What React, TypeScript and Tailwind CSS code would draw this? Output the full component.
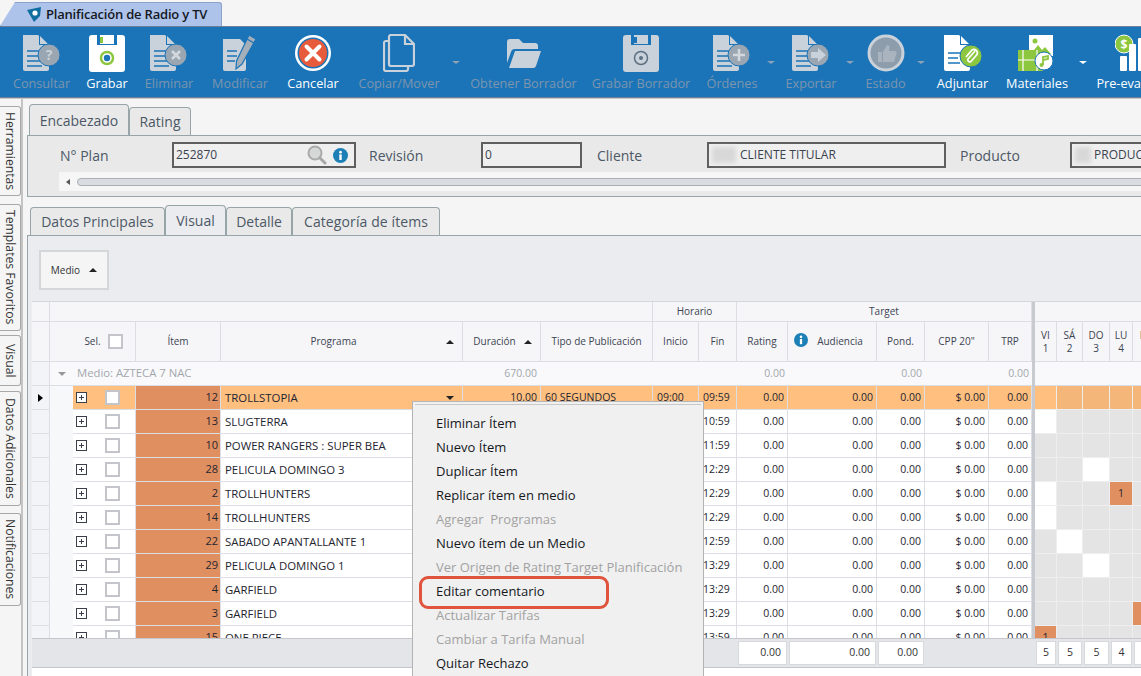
import React from "react";

const gridCols =
  "grid grid-cols-[18px_23px_17px_46px_85px_242px_78px_112px_46px_38px_51px_89px_48px_64px_43px_3px_22px_26px_27px_23px_30px]";

const cellBorder = "border-r border-b border-[#dcdee3]";
const sansFont = "font-['Open_Sans',sans-serif]";

const FileBody = ({ color, children }: { color: string; children?: React.ReactNode }) => (
  <svg width="40" height="38" viewBox="0 0 40 38">
    <path d="M1 1h15l11 11v23a2 2 0 0 1-2 2H3a2 2 0 0 1-2-2z" fill={color} />
    <path d="M17 1v10h10z" fill="#1b74b8" />
    <path d="M18 2l8 8h-8z" fill={color} />
    <path d="M5 17h12M5 22h12M5 27h15M5 32h15" stroke="#1b74b8" strokeWidth="1.6" />
    {children}
  </svg>
);

const BadgeDoc = ({ glyph }: { glyph: "q" | "x" | "plus" | "arrow" }) => (
  <FileBody color="#c9d1da">
    <circle cx="27" cy="21" r="11" fill="#9aa6b2" stroke="#1b74b8" strokeWidth="1" />
    {glyph === "q" && (
      <text x="27" y="26" textAnchor="middle" fontSize="14" fontWeight="700" fill="#c9d1da">
        ?
      </text>
    )}
    {glyph === "x" && <path d="M23 17l8 8M31 17l-8 8" stroke="#d3d8de" strokeWidth="2.6" />}
    {glyph === "plus" && <path d="M27 15v12M21 21h12" stroke="#d3d8de" strokeWidth="2.6" />}
    {glyph === "arrow" && <path d="M20 18h7v-4l8 7-8 7v-4h-7z" fill="#c9d1da" />}
  </FileBody>
);

const Floppy = ({ color, ring }: { color: string; ring?: boolean }) => (
  <svg width="38" height="38" viewBox="0 0 38 38">
    <path d="M4 1h5v10h20V1h5a3 3 0 0 1 3 3v31a3 3 0 0 1-3 3H4a3 3 0 0 1-3-3V4a3 3 0 0 1 3-3z" fill={color} />
    <rect x="12" y="1" width="14" height="9" fill={color} />
    <rect x="12" y="3" width="3" height="6" fill={ring ? "#8dc63f" : "#1b74b8"} />
    <circle cx="19" cy="24" r="6.5" fill={ring ? "#8dc63f" : "none"} stroke={ring ? "#8dc63f" : "#5d7182"} strokeWidth="1.5" />
    <circle cx="19" cy="24" r="4" fill={ring ? "#1c75b9" : color} stroke={ring ? "#fff" : "none"} strokeWidth="1.6" />
    {!ring && <circle cx="19" cy="24" r="2" fill="#5d7182" />}
  </svg>
);

const PencilDoc = () => (
  <svg width="36" height="38" viewBox="0 0 36 38">
    <path d="M1 5h17l6 6v24a2 2 0 0 1-2 2H3a2 2 0 0 1-2-2z" fill="#c9d1da" />
    <path d="M5 17h10M5 22h10M5 27h8" stroke="#1b74b8" strokeWidth="1.6" />
    <path d="M27 1l7 4-14 25-6 5 .5-8z" fill="#a4afba" stroke="#1b74b8" strokeWidth="1.2" />
    <path d="M25 5l7 4" stroke="#1b74b8" strokeWidth="1.4" />
  </svg>
);

const CancelIcon = () => (
  <svg width="38" height="38" viewBox="0 0 38 38">
    <circle cx="19" cy="19" r="18" fill="#fff" />
    <circle cx="19" cy="19" r="15.5" fill="#1b74b8" />
    <circle cx="19" cy="19" r="14" fill="#e85a3c" />
    <path d="M12.5 12.5l13 13M25.5 12.5l-13 13" stroke="#fff" strokeWidth="4" strokeLinecap="round" />
  </svg>
);

const CopyIcon = () => (
  <svg width="32" height="38" viewBox="0 0 32 38" fill="none" stroke="#c9d1da" strokeWidth="2.2">
    <path d="M6 7H3a2 2 0 0 0-2 2v26a2 2 0 0 0 2 2h20a2 2 0 0 0 2-2v-3" />
    <path d="M8 1h14l9 9v20a2 2 0 0 1-2 2H8a2 2 0 0 1-2-2V3a2 2 0 0 1 2-2z" />
    <path d="M22 1v9h9" />
  </svg>
);

const FolderIcon = () => (
  <svg width="36" height="34" viewBox="0 0 36 34">
    <path d="M1 6a3 3 0 0 1 3-3h9l4 4h12a3 3 0 0 1 3 3v3H9a4 4 0 0 0-4 3L1 27z" fill="#c9d1da" />
    <path d="M9 15h26l-5 15a3 3 0 0 1-3 2H3z" fill="#c9d1da" />
  </svg>
);

const ThumbIcon = () => (
  <svg width="38" height="38" viewBox="0 0 38 38">
    <circle cx="19" cy="19" r="17" fill="#8e9dac" stroke="#c9d1da" strokeWidth="3" />
    <path d="M11 18h4v10h-4zM16 18l4-7c2 0 3 1 2.500 3l-.5 3h6c1 0 2 1 1.500 2.500l-2 7c-.3 1-1 1.500-2 1.500H16z" fill="#a9b4bf" />
  </svg>
);

const AttachIcon = () => (
  <svg width="40" height="38" viewBox="0 0 40 38">
    <path d="M1 1h15l11 11v23a2 2 0 0 1-2 2H3a2 2 0 0 1-2-2z" fill="#fff" />
    <path d="M17 1v10h10z" fill="#1b74b8" />
    <path d="M18 2l8 8h-8z" fill="#fff" />
    <path d="M5 19h12M5 24h10M5 29h12" stroke="#1b74b8" strokeWidth="1.6" />
    <circle cx="28" cy="22" r="11" fill="#8dc63f" stroke="#1b74b8" />
    <path d="M32 17l-7 8a2 2 0 0 0 3 2.500l6-7a3.500 3.500 0 0 0-5-4.500l-6 7" fill="none" stroke="#fff" strokeWidth="1.7" />
  </svg>
);

const MaterialsIcon = () => (
  <svg width="40" height="38" viewBox="0 0 40 38">
    <rect x="12" y="1" width="24" height="21" fill="#fff" />
    <circle cx="18" cy="7" r="2.500" fill="#8dc63f" />
    <path d="M14 20l7-9 4 5 3-3 6 7z" fill="#8dc63f" />
    <rect x="1" y="16" width="25" height="21" fill="#8dc63f" />
    <path d="M6 16v21M20 16v21M1 26h25" stroke="#fff" strokeWidth="1.2" />
    <circle cx="27" cy="27" r="9" fill="#fff" stroke="#1b74b8" />
    <path d="M26 31v-8l5-1v3l-5 1" fill="none" stroke="#8dc63f" strokeWidth="1.8" />
    <circle cx="24.500" cy="31" r="2" fill="#8dc63f" />
  </svg>
);

const PreEvalIcon = () => (
  <svg width="50" height="38" viewBox="0 0 50 38">
    <circle cx="9" cy="10" r="9" fill="#8dc63f" stroke="#fff" strokeWidth="1" />
    <text x="9" y="14.500" textAnchor="middle" fontSize="12" fontWeight="700" fill="#fff">
      $
    </text>
    <rect x="5" y="22" width="7" height="15" rx="1" fill="#fff" />
    <rect x="14" y="10" width="7" height="27" rx="1" fill="#fff" />
    <rect x="23" y="4" width="7" height="33" rx="1" fill="#fff" />
  </svg>
);

const InfoDot = ({ size = 15 }: { size?: number }) => (
  <svg width={size} height={size} viewBox="0 0 16 16">
    <circle cx="8" cy="8" r="8" fill="#1c7fb5" />
    <rect x="6.700" y="6.800" width="2.600" height="6" fill="#fff" />
    <circle cx="8" cy="4.400" r="1.500" fill="#fff" />
  </svg>
);

const SearchIcon = () => (
  <svg width="20" height="20" viewBox="0 0 20 20">
    <circle cx="8" cy="8" r="6.500" fill="#d6d8d8" stroke="#aaa" strokeWidth="2" />
    <path d="M13 13l5 5" stroke="#a8a8a8" strokeWidth="3" strokeLinecap="round" />
  </svg>
);

type ToolEntry =
  | { kind: "arrow"; cls: string; on?: boolean }
  | { kind: "tool"; cls: string; label: string; on?: boolean; icon: React.ReactNode };

const tools: ToolEntry[] = [
  { kind: "tool", cls: "ml-0 w-[59px]", label: "Consultar", icon: <BadgeDoc glyph="q" /> },
  { kind: "tool", cls: "ml-[16px] w-[40px]", label: "Grabar", on: true, icon: <Floppy color="#fff" ring /> },
  { kind: "tool", cls: "ml-[17px] w-[50px]", label: "Eliminar", icon: <BadgeDoc glyph="x" /> },
  { kind: "tool", cls: "ml-[16px] w-[60px]", label: "Modificar", icon: <PencilDoc /> },
  { kind: "tool", cls: "ml-[17px] w-[52px]", label: "Cancelar", on: true, icon: <CancelIcon /> },
  { kind: "tool", cls: "ml-[18px] w-[84px]", label: "Copiar/Mover", icon: <CopyIcon /> },
  { kind: "arrow", cls: "ml-[11px]" },
  { kind: "tool", cls: "ml-[11px] w-[105px]", label: "Obtener Borrador", icon: <FolderIcon /> },
  { kind: "tool", cls: "ml-[17px] w-[96px]", label: "Grabar Borrador", icon: <Floppy color="#c9d1da" /> },
  { kind: "tool", cls: "ml-[18px] w-[50px]", label: "Órdenes", icon: <BadgeDoc glyph="plus" /> },
  { kind: "arrow", cls: "ml-[10px]" },
  { kind: "tool", cls: "ml-[11px] w-[50px]", label: "Exportar", icon: <BadgeDoc glyph="arrow" /> },
  { kind: "arrow", cls: "ml-[10px]" },
  { kind: "tool", cls: "ml-[12px] w-[39px]", label: "Estado", icon: <ThumbIcon /> },
  { kind: "arrow", cls: "ml-[12px]" },
  { kind: "tool", cls: "ml-[11px] w-[53px]", label: "Adjuntar", on: true, icon: <AttachIcon /> },
  { kind: "tool", cls: "ml-[17px] w-[62px]", label: "Materiales", on: true, icon: <MaterialsIcon /> },
  { kind: "arrow", cls: "ml-[11px]", on: true },
  { kind: "tool", cls: "ml-[10px] w-[86px]", label: "Pre-evaluación", on: true, icon: <PreEvalIcon /> },
];

const rows = [
  { id: 12, name: "TROLLSTOPIA", fin: "09:59", days: ["", "h", "h", "h", "h"] },
  { id: 13, name: "SLUGTERRA", fin: "10:59", days: ["w", "g", "g", "g", "g"] },
  { id: 10, name: "POWER RANGERS : SUPER BEA", fin: "11:59", days: ["g", "g", "g", "g", "g"] },
  { id: 28, name: "PELICULA DOMINGO 3", fin: "12:29", days: ["g", "g", "w", "g", "g"] },
  { id: 2, name: "TROLLHUNTERS", fin: "12:29", days: ["w", "g", "g", "o", "g"] },
  { id: 14, name: "TROLLHUNTERS", fin: "12:29", days: ["w", "g", "g", "g", "g"] },
  { id: 22, name: "SABADO APANTALLANTE 1", fin: "12:59", days: ["g", "w", "g", "g", "g"] },
  { id: 29, name: "PELICULA DOMINGO 1", fin: "13:29", days: ["g", "g", "w", "g", "g"] },
  { id: 4, name: "GARFIELD", fin: "13:29", days: ["g", "g", "g", "g", "g"] },
  { id: 3, name: "GARFIELD", fin: "13:29", days: ["g", "g", "g", "g", "b"] },
  { id: 15, name: "ONE PIECE", fin: "13:59", days: ["o", "g", "g", "g", "g"] },
];

const menuItems = [
  { label: "Eliminar Ítem", on: true },
  { label: "Nuevo Ítem", on: true },
  { label: "Duplicar Ítem", on: true },
  { label: "Replicar ítem en medio", on: true },
  { label: "Agregar  Programas", on: false },
  { label: "Nuevo ítem de un Medio", on: true },
  { label: "Ver Origen de Rating Target Planificación", on: false },
  { label: "Editar comentario", on: true },
  { label: "Actualizar Tarifas", on: false },
  { label: "Cambiar a Tarifa Manual", on: false },
  { label: "Quitar Rechazo", on: true },
];

const sideTabs = [
  { label: "Herramientas", cls: "mt-[7px] h-[90px]" },
  { label: "Templates Favoritos", cls: "mt-[8px] h-[127px]" },
  { label: "Visual", cls: "mt-[4px] h-[51px]" },
  { label: "Datos Adicionales", cls: "mt-[5px] h-[115px]" },
  { label: "Notificaciones", cls: "mt-[7px] h-[93px]" },
];

const Checkbox = () => (
  <span className="block h-[15px] w-[15px] border-2 border-[#c3c5cb] bg-white" />
);

const Expand = () => (
  <span className="relative block h-[11px] w-[11px] border border-[#3b3f4a] bg-white">
    <span className="absolute left-[2px] top-[4px] h-px w-[5px] bg-[#3b3f4a]" />
    <span className="absolute left-[4px] top-[2px] h-[5px] w-px bg-[#3b3f4a]" />
  </span>
);

const HeadCell = ({ children, cls = "" }: { children?: React.ReactNode; cls?: string }) => (
  <div className={`flex items-center justify-center ${cellBorder} text-[10px] text-[#3c4452] ${cls}`}>
    {children}
  </div>
);

const NumCell = ({ value }: { value: string }) => (
  <div className={`flex items-center justify-end pr-[3px] ${cellBorder} font-medium`}>{value}</div>
);

const DayCell = ({ kind }: { kind: string }) => {
  let bg = "bg-[#e4e4e4]";
  if (kind === "") bg = "bg-[#febf7f]";
  if (kind === "h") bg = "bg-[#f5b67a]";
  if (kind === "w") bg = "bg-white";
  if (kind === "o" || kind === "b") bg = "bg-[#e08f60]";
  return (
    <div className={`flex items-center justify-center border-r border-b border-[#eeeeee] ${bg}`}>
      {kind === "o" ? "1" : ""}
    </div>
  );
};

const DataRow = ({ row, hot }: { row: (typeof rows)[number]; hot: boolean }) => (
  <div className={`${gridCols} h-[24px] text-[10.500px] text-[#1e2530] ${hot ? "bg-[#febf7f]" : "bg-white"}`}>
    <div className={`flex items-center justify-center bg-[#f3f4f7] ${cellBorder}`}>
      {hot && <span className="h-0 w-0 border-y-[4px] border-l-[5px] border-y-transparent border-l-black" />}
    </div>
    <div className="bg-[#f7f8fa]" />
    <div className="flex items-center justify-center border-b border-[#dcdee3]">
      <Expand />
    </div>
    <div className={`flex items-center justify-center ${cellBorder}`}>
      <Checkbox />
    </div>
    <div className={`flex items-center justify-end bg-[#e08f60] pr-[2px] text-[11px] font-medium ${cellBorder}`}>{row.id}</div>
    <div className={`flex items-center justify-between pl-[4px] pr-[8px] text-[11.400px] font-medium ${cellBorder}`}>
      <span>{row.name}</span>
      {hot && <span className="h-0 w-0 border-x-[4px] border-t-[4px] border-x-transparent border-t-[#222]" />}
    </div>
    <NumCell value={hot ? "10.00" : ""} />
    <div className={`flex items-center pl-[4px] font-medium ${cellBorder}`}>{hot ? "60 SEGUNDOS" : ""}</div>
    <div className={`flex items-center pl-[4px] font-medium ${cellBorder}`}>{hot ? "09:00" : ""}</div>
    <div className={`flex items-center pl-[4px] font-medium ${cellBorder}`}>{row.fin}</div>
    <NumCell value="0.00" />
    <NumCell value="0.00" />
    <NumCell value="0.00" />
    <NumCell value="$ 0.00" />
    <NumCell value="0.00" />
    <div className="bg-[#c8cacf]" />
    {row.days.map((d, i) => (
      <DayCell key={i} kind={d} />
    ))}
  </div>
);

const TotalBox = ({ value, center }: { value: string; center?: boolean }) => (
  <div className={`mx-[1px] my-[2px] flex items-center border border-[#d8d9dd] bg-white font-medium ${center ? "justify-center" : "justify-end pr-[5px]"}`}>
    {value}
  </div>
);

export default function App() {
  return (
    <div className={`relative flex h-[676px] w-[1141px] flex-col overflow-hidden bg-[#f5f5f5] ${sansFont}`}>
      {/* pestaña superior */}
      <div className="h-[26px] shrink-0 pt-[2px]">
        <div className="flex h-[24px] w-[222px] items-center gap-[4px] rounded-tr-[3px] border border-b-0 border-[#8aa3cc] bg-[#aec3ea] pl-[26px] [clip-path:polygon(15px_0,100%_0,100%_100%,0_100%)]">
          <svg width="15" height="15" viewBox="0 0 15 15">
            <path d="M0 3l14-3-1 9-6 6z" fill="#0f6d9f" />
            <circle cx="8" cy="6" r="2.600" fill="#fff" />
          </svg>
          <span className="whitespace-nowrap text-[13px] font-semibold tracking-[-0.2px] text-[#14181f]">
            Planificación de Radio y TV
          </span>
        </div>
      </div>

      {/* barra de acciones */}
      <div className="flex h-[72px] shrink-0 border-y border-[#6d7f99] bg-[#1b74b8] pl-[12px] pt-[7px]">
        {tools.map((t, i) =>
          t.kind === "arrow" ? (
            <div key={i} className={`${t.cls} w-[8px] pt-[27px]`}>
              <div className={`h-0 w-0 border-x-[4px] border-t-[3px] border-x-transparent ${t.on ? "border-t-white" : "border-t-[#8ba2b8]"}`} />
            </div>
          ) : (
            <div key={i} className={`${t.cls} flex shrink-0 flex-col items-center`}>
              <div className="flex h-[38px] items-center justify-center">{t.icon}</div>
              <span className={`mt-[3px] whitespace-nowrap text-[12.700px] leading-[17px] ${t.on ? "text-white" : "text-[#7d95ad]"}`}>
                {t.label}
              </span>
            </div>
          ),
        )}
      </div>

      <div className="flex min-h-0 flex-1 border-t border-[#c9c9c9]">
        {/* pestañas laterales */}
        <div className="flex w-[23px] shrink-0 flex-col border-r-2 border-[#c4c4c4]">
          {sideTabs.map((t) => (
            <div
              key={t.label}
              className={`${t.cls} flex w-[21px] items-center justify-center rounded-r-[3px] border border-l-0 border-[#a8a8a8] bg-[#f5f5f5] text-[12.200px] text-[#333] [writing-mode:vertical-rl]`}
            >
              {t.label}
            </div>
          ))}
        </div>

        <div className="flex min-w-0 flex-1 flex-col pl-[4px] pt-[5px]">
          {/* encabezado */}
          <div className="flex h-[31px] items-end pl-[2px] text-[14px] text-[#4c5866]">
            <div className="flex h-[31px] w-[100px] items-center justify-center rounded-t-[4px] border border-b-0 border-[#97a5a8] bg-[#e9e9e9]">
              Encabezado
            </div>
            <div className="flex h-[28px] w-[62px] items-center justify-center rounded-t-[4px] border border-b-0 border-[#97a5a8] bg-[#e9e9e9]">
              Rating
            </div>
          </div>
          <div className="h-[62px] w-[1200px] shrink-0 border border-[#97a5a8] bg-[#e9e9e9]">
            <div className="flex h-[36px] items-center pl-[32px] pt-[2px] text-[14px] text-[#4c5866]">
              <span className="w-[112px]">N° Plan</span>
              <div className="flex h-[26px] w-[184px] items-center justify-between border-2 border-[#5f5f5f] bg-[#efefef] px-[2px] text-[12px] text-[#3a4250]">
                <span>252870</span>
                <span className="flex items-center gap-[6px] pr-[4px]">
                  <SearchIcon />
                  <InfoDot />
                </span>
              </div>
              <span className="ml-[13px] w-[112px]">Revisión</span>
              <div className="flex h-[26px] w-[101px] items-center border-2 border-[#5f5f5f] bg-[#efefef] px-[2px] text-[12px] text-[#3a4250]">
                0
              </div>
              <span className="ml-[15px] w-[110px]">Cliente</span>
              <div className="flex h-[26px] w-[239px] items-center border-2 border-[#5f5f5f] bg-[#efefef] pl-[3px] text-[12px] text-[#3a4250]">
                <span className="mr-[4px] h-[16px] w-[24px] bg-[#d8d8d8] blur-[2px]" />
                CLIENTE TITULAR
              </div>
              <span className="ml-[14px] w-[110px]">Producto</span>
              <div className="flex h-[26px] w-[130px] items-center border-2 border-[#5f5f5f] bg-[#efefef] pl-[3px] text-[12px] text-[#3a4250]">
                <span className="mr-[3px] h-[16px] w-[16px] bg-[#d8d8d8] blur-[2px]" />
                PRODUCTO
              </div>
            </div>
            <div className="ml-[31px] flex h-[19px] items-center bg-[#f6f6f6] pl-[7px]">
              <span className="h-0 w-0 border-y-[3px] border-r-[4px] border-y-transparent border-r-[#555]" />
              <div className="ml-[7px] h-[8px] flex-1 rounded-full border border-[#a9afb5] bg-[#d9dce0]" />
            </div>
          </div>

          {/* pestañas del plan */}
          <div className="mt-[10px] flex h-[28px] shrink-0 items-end pl-[3px] text-[14px] text-[#4c5866]">
            <div className="flex h-[28px] w-[135px] items-center justify-center rounded-t-[4px] border border-b-0 border-[#97a5a8] bg-[#e9e9e9]">
              Datos Principales
            </div>
            <div className="-mt-[2px] flex h-[30px] w-[61px] items-center justify-center rounded-t-[4px] border border-b-0 border-[#97a5a8] bg-[#ebecf0]">
              Visual
            </div>
            <div className="flex h-[28px] w-[66px] items-center justify-center rounded-t-[4px] border border-b-0 border-[#97a5a8] bg-[#e9e9e9]">
              Detalle
            </div>
            <div className="flex h-[28px] w-[148px] items-center justify-center rounded-t-[4px] border border-b-0 border-[#97a5a8] bg-[#e9e9e9] tracking-[0.1px]">
              Categoría de ítems
            </div>
          </div>

          <div className="flex min-h-0 flex-1 flex-col border-l border-t border-[#97a5a8] bg-[#ebecf0]">
            <div className="h-[65px] shrink-0 pl-[11px] pt-[14px]">
              <div className="flex h-[40px] w-[70px] items-center justify-center gap-[9px] border-2 border-[#d4d6da] bg-[#f5f5f6] text-[10px] text-[#333]">
                Medio
                <span className="h-0 w-0 border-x-[4px] border-b-[4px] border-x-transparent border-b-[#222]" />
              </div>
            </div>

            {/* tabla */}
            <div className="ml-[4px] flex min-h-0 flex-1 flex-col overflow-hidden border-t border-[#d4d6da] bg-white">
              <div className={`${gridCols} h-[20px] shrink-0 bg-[#f6f6f8]`}>
                <HeadCell />
                <HeadCell cls="col-span-7" />
                <HeadCell cls="col-span-2">Horario</HeadCell>
                <HeadCell cls="col-span-5">Target</HeadCell>
                <div className="bg-[#c8cacf]" />
                <HeadCell cls="col-span-5" />
              </div>
              <div className={`${gridCols} h-[40px] shrink-0 bg-[#f6f6f8]`}>
                <HeadCell />
                <HeadCell cls="col-span-3 gap-[7px] pl-[22px]">
                  Sel. <Checkbox />
                </HeadCell>
                <HeadCell>Ítem</HeadCell>
                <HeadCell cls="relative pr-[16px]">
                  Programa
                  <span className="absolute right-[8px] top-[18px] h-0 w-0 border-x-[4px] border-b-[4px] border-x-transparent border-b-[#222]" />
                </HeadCell>
                <HeadCell cls="relative pr-[14px]">
                  Duración
                  <span className="absolute right-[8px] top-[18px] h-0 w-0 border-x-[4px] border-b-[4px] border-x-transparent border-b-[#222]" />
                </HeadCell>
                <HeadCell>Tipo de Publicación</HeadCell>
                <HeadCell>Inicio</HeadCell>
                <HeadCell>Fin</HeadCell>
                <HeadCell>Rating</HeadCell>
                <HeadCell cls="relative pl-[16px]">
                  <span className="absolute left-[6px] top-[11px]">
                    <InfoDot size={14} />
                  </span>
                  Audiencia
                </HeadCell>
                <HeadCell>Pond.</HeadCell>
                <HeadCell>CPP 20"</HeadCell>
                <HeadCell>TRP</HeadCell>
                <div className="bg-[#c8cacf]" />
                {["VI 1", "SÁ 2", "DO 3", "LU 4", "MA 5"].map((d) => (
                  <HeadCell key={d} cls="px-[3px] text-center leading-[13px] text-[10.500px]">
                    {d}
                  </HeadCell>
                ))}
              </div>

              <div className={`${gridCols} h-[24px] shrink-0 bg-[#f9f9fb] text-[10.500px] text-[#a3a7ad]`}>
                <div className={`bg-[#f3f4f7] ${cellBorder}`} />
                <div className="col-span-5 flex items-center gap-[11px] whitespace-nowrap border-b border-[#dcdee3] pl-[8px] text-[11.300px]">
                  <span className="h-0 w-0 border-x-[4px] border-t-[4px] border-x-transparent border-t-[#999]" />
                  Medio: AZTECA 7 NAC
                </div>
                <div className="flex items-center justify-end border-b border-[#dcdee3] pr-[4px]">670.00</div>
                <div className="col-span-3 border-b border-[#dcdee3]" />
                <div className="flex items-center justify-end border-b border-[#dcdee3] pr-[3px]">0.00</div>
                <div className="border-b border-[#dcdee3]" />
                <div className="flex items-center justify-end border-b border-[#dcdee3] pr-[3px]">0.00</div>
                <div className="border-b border-[#dcdee3]" />
                <div className="flex items-center justify-end border-b border-[#dcdee3] pr-[3px]">0.00</div>
                <div className="bg-[#c8cacf]" />
                <div className="col-span-5 border-b border-[#dcdee3]" />
              </div>

              <div className="h-[252px] shrink-0 overflow-hidden">
                {rows.map((r, i) => (
                  <DataRow key={r.id} row={r} hot={i === 0} />
                ))}
              </div>

              <div className={`${gridCols} h-[30px] shrink-0 border-y border-[#c4c6cb] bg-[#e4e5e9] text-[10.500px] text-[#333]`}>
                <div className="col-span-10" />
                <TotalBox value="0.00" />
                <TotalBox value="0.00" />
                <TotalBox value="0.00" />
                <div className="col-span-3" />
                <TotalBox value="5" center />
                <TotalBox value="5" center />
                <TotalBox value="5" center />
                <TotalBox value="4" center />
                <TotalBox value="5" center />
              </div>
            </div>
          </div>
        </div>
      </div>

      {/* menú contextual */}
      <div className="absolute left-[412px] top-[401px] h-[290px] w-[292px] border border-[#b4b4b4] bg-[#f0f0f0] px-[2px] pt-[2px] text-[13px]">
        <div className="border-t border-[#c9c9c9] pl-[21px] pt-[7px]">
          {menuItems.map((m) => (
            <div key={m.label} className={`flex h-[24px] items-center whitespace-pre ${m.on ? "text-[#15181d]" : "text-[#a2a2a2]"}`}>
              {m.label}
            </div>
          ))}
        </div>
      </div>

      {/* marca de la captura */}
      <div className="absolute left-[419px] top-[576px] h-[33px] w-[190px] rounded-[9px] border-[3px] border-[#e0533c]" />
    </div>
  );
}
